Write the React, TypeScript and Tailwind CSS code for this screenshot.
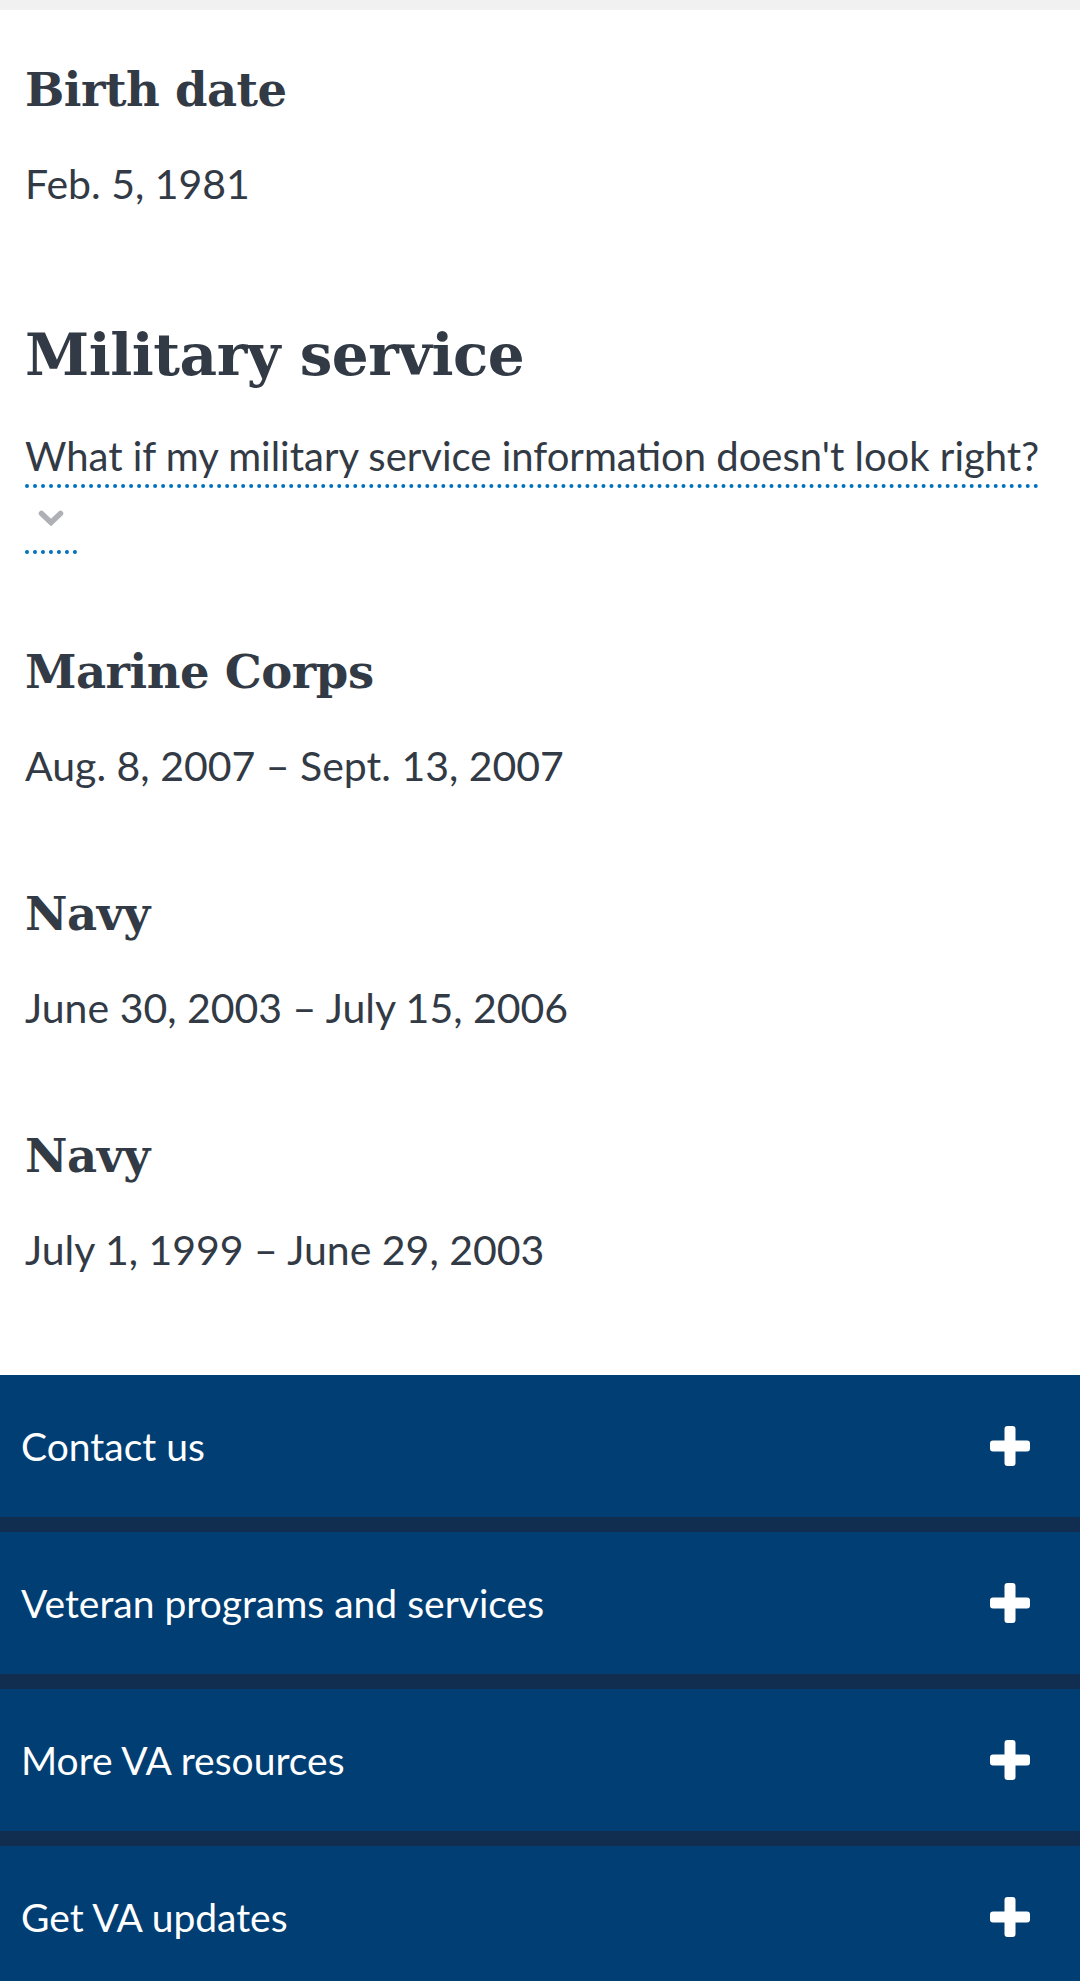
import React from 'react';

const serif = { fontFamily: '"DejaVu Serif", serif' };

const services = [
  { branch: 'Marine Corps', dates: 'Aug. 8, 2007 – Sept. 13, 2007' },
  { branch: 'Navy', dates: 'June 30, 2003 – July 15, 2006' },
  { branch: 'Navy', dates: 'July 1, 1999 – June 29, 2003' },
];

const footerLinks = ['Contact us', 'Veteran programs and services', 'More VA resources', 'Get VA updates'];

const Chevron: React.FC = () => (
  <svg width="26" height="16" viewBox="0 0 26 16" className="block">
    <path d="M3.5 3.5 L13 12.5 L22.5 3.5" fill="none" stroke="#aeb0b5" strokeWidth="5.5" strokeLinecap="round" strokeLinejoin="miter" />
  </svg>
);

const Plus: React.FC = () => (
  <svg width="40" height="40" viewBox="0 0 40 40">
    <rect x="0" y="14.5" width="40" height="11" rx="3" fill="#fff" />
    <rect x="14.5" y="0" width="11" height="40" rx="3" fill="#fff" />
  </svg>
);

const Heading: React.FC<{ children: React.ReactNode }> = ({ children }) => (
  <h3 className="text-[46.5px] leading-[56px] font-bold tracking-[-0.5px] text-[#323a45]" style={serif}>
    {children}
  </h3>
);

const App: React.FC = () => {
  return (
    <div className="h-[1981px] overflow-hidden bg-white font-['Lato',sans-serif] text-[#323a45]">
      <div className="h-[10px] bg-[#f1f1f1]" />

      <div className="px-[25px]">
        <section className="pt-[52px]">
          <Heading>Birth date</Heading>
          <p className="mt-[36px] text-[41px] leading-[60px]">Feb. 5, 1981</p>
        </section>

        <section className="mt-[106px]">
          <h2 className="text-[58px] leading-[70px] font-bold tracking-[-0.5px]" style={serif}>
            Military service
          </h2>

          <button type="button" className="mt-[33px] block text-left text-[40px] text-[#323a45]">
            <div className="h-[67px] leading-[67px]">
              <span className="border-b-[4px] border-dotted border-[#0071bb] pb-[4px] whitespace-nowrap">
                What if my military service information doesn't look right?
              </span>
            </div>
            <div className="h-[67px] pt-[19px]">
              <span className="inline-block border-b-[4px] border-dotted border-[#0071bb] px-[13px] pb-[24px]">
                <Chevron />
              </span>
            </div>
          </button>

          <div className="mt-[87px] flex flex-col gap-[90px]">
            {services.map((s, i) => (
              <div key={i}>
                <Heading>{s.branch}</Heading>
                <p className="mt-[36px] text-[41px] leading-[60px]">{s.dates}</p>
              </div>
            ))}
          </div>
        </section>
      </div>

      <footer className="mt-[95px] flex flex-col gap-[15px] bg-[#112e51]">
        {footerLinks.map(label => (
          <button
            key={label}
            type="button"
            className="flex h-[142px] w-full items-center justify-between bg-[#003e73] pl-[21px] pr-[50px] text-left text-[39px] text-white"
          >
            <span>{label}</span>
            <Plus />
          </button>
        ))}
      </footer>
    </div>
  );
};

export default App;
